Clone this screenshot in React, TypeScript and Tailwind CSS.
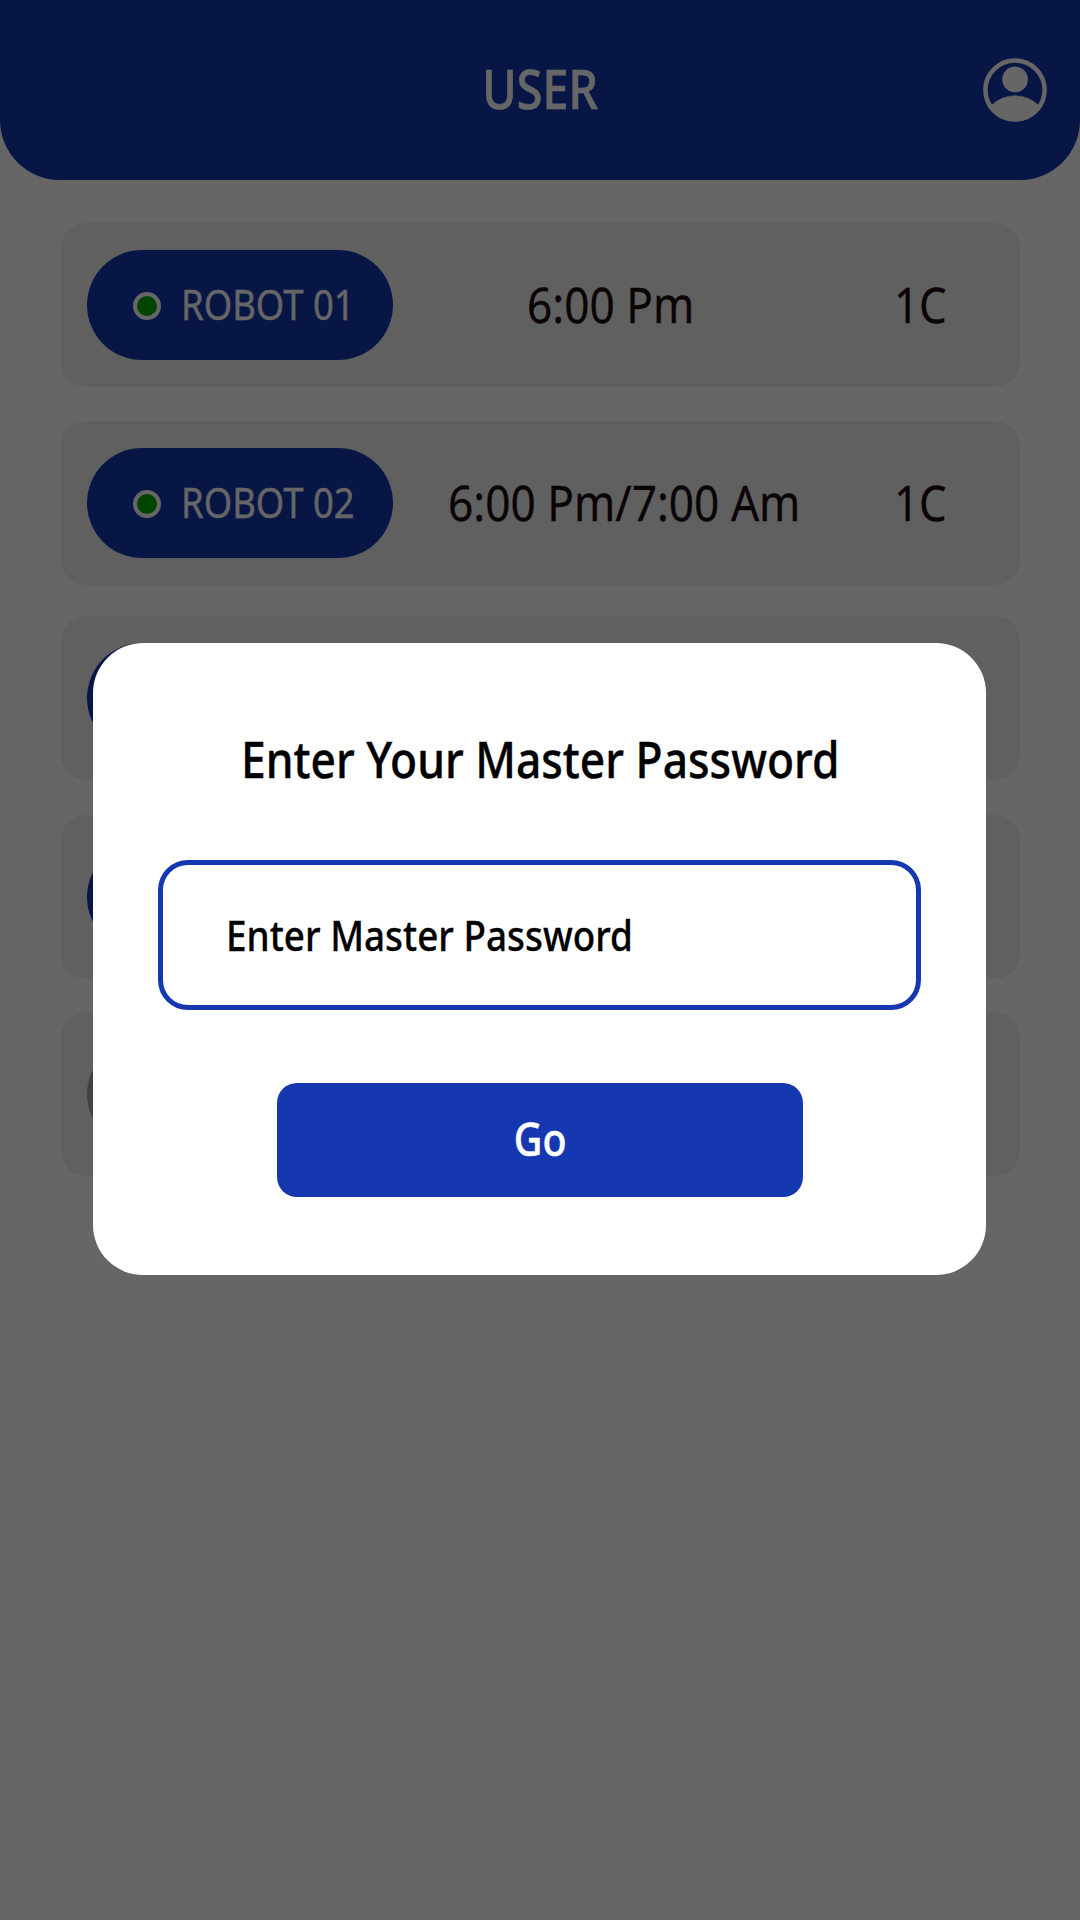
import React from "react";

type Robot = {
  name: string;
  time: string;
  bay: string;
  online: boolean;
  gap: string;
  timePad: string;
};

const robots: Robot[] = [
  { name: "ROBOT 01", time: "6:00 Pm", bay: "1C", online: true, gap: "mt-[43px]", timePad: "pl-[134px]" },
  { name: "ROBOT 02", time: "6:00 Pm/7:00 Am", bay: "1C", online: true, gap: "mt-[34px]", timePad: "pl-[55px]" },
  { name: "ROBOT 03", time: "6:00 Pm", bay: "1C", online: true, gap: "mt-[31px]", timePad: "pl-[134px]" },
  { name: "ROBOT 04", time: "6:00 Pm", bay: "1C", online: true, gap: "mt-[35px]", timePad: "pl-[134px]" },
  { name: "ROBOT 05", time: "6:00 Pm", bay: "1C", online: false, gap: "mt-[33px]", timePad: "pl-[134px]" },
];

function UserIcon() {
  return (
    <svg viewBox="0 0 64 64" className="h-16 w-16" fill="none">
      <circle cx="32" cy="32" r="29.6" stroke="white" strokeWidth="4.5" />
      <circle cx="32.1" cy="21.4" r="12.8" fill="white" />
      <path d="M8.200 47.600A33.600 33.600 0 0 1 55.800 47.600A29.600 29.600 0 0 1 8.200 47.600Z" fill="white" stroke="white" strokeWidth="0.5" />
    </svg>
  );
}

function RobotCard({ robot }: { robot: Robot }) {
  return (
    <li className={`flex h-[164px] w-[959px] items-center rounded-[25px] bg-[#f0f0f0] pl-[26px] ${robot.gap}`}>
      <div
        className={`flex h-[110px] w-[306px] shrink-0 items-center rounded-full pl-[46px] ${
          robot.online ? "bg-[#1538b0]" : "bg-[#a5a7aa]"
        }`}
      >
        <span className="mt-0.5 h-7 w-7 shrink-0 rounded-full border-4 border-white bg-[#00aa00]" />
        <span className="mb-0.5 ml-5 origin-left scale-x-[0.868] text-[42px] leading-none whitespace-nowrap text-white [-webkit-text-stroke:0.3px_white]">
          {robot.name}
        </span>
      </div>
      <div className={`mb-0.5 flex w-[501px] shrink-0 ${robot.timePad}`}>
        <span className="origin-left scale-x-[0.884] text-[50px] leading-none whitespace-nowrap text-[#1c0c0d] [-webkit-text-stroke:0.3px_#1c0c0d]">
          {robot.time}
        </span>
      </div>
      <span className="mb-0.5 origin-left scale-x-[0.872] text-[50px] leading-none text-[#1c0c0d] [-webkit-text-stroke:0.3px_#1c0c0d]">
        {robot.bay}
      </span>
    </li>
  );
}

export default function App() {
  return (
    <div className="relative h-[1920px] w-[1080px] overflow-hidden bg-white font-['Noto_Sans',sans-serif]">
      <header className="grid h-[180px] grid-cols-[1fr_auto_1fr] items-center rounded-b-[60px] bg-[#1538b0] px-[33px]">
        <span />
        <h1 className="mb-[5px] scale-x-[0.849] text-[55px] leading-none font-medium text-white [-webkit-text-stroke:0.7px_white]">
          USER
        </h1>
        <button className="justify-self-end" aria-label="Account">
          <UserIcon />
        </button>
      </header>
      <ul className="flex flex-col pl-[61px]">
        {robots.map((robot) => (
          <RobotCard key={robot.name} robot={robot} />
        ))}
      </ul>

      <div className="absolute inset-0 flex items-start justify-center bg-black/60 pt-[643px] pr-px">
        <section className="flex h-[632px] w-[893px] flex-col items-center rounded-[50px] bg-white">
          <h2 className="mt-[91px] ml-px scale-x-[0.887] text-[50px] leading-[50px] font-medium whitespace-nowrap text-black [-webkit-text-stroke:0.4px_black]">
            Enter Your Master Password
          </h2>
          <div className="mt-[76px] flex h-[150px] w-[763px] items-center rounded-[30px] border-5 border-[#1538b0] pl-[63px]">
            <span className="origin-left scale-x-[0.878] text-[42px] leading-none font-medium whitespace-nowrap text-black [-webkit-text-stroke:0.3px_black]">
              Enter Master Password
            </span>
          </div>
          <button className="mt-[73px] flex h-[114px] w-[526px] items-center justify-center rounded-[20px] bg-[#1538b0] pb-[4px] pl-0.5 text-[45px] leading-none font-medium text-white">
            <span className="scale-x-[0.875] [-webkit-text-stroke:0.5px_white]">Go</span>
          </button>
        </section>
      </div>
    </div>
  );
}
